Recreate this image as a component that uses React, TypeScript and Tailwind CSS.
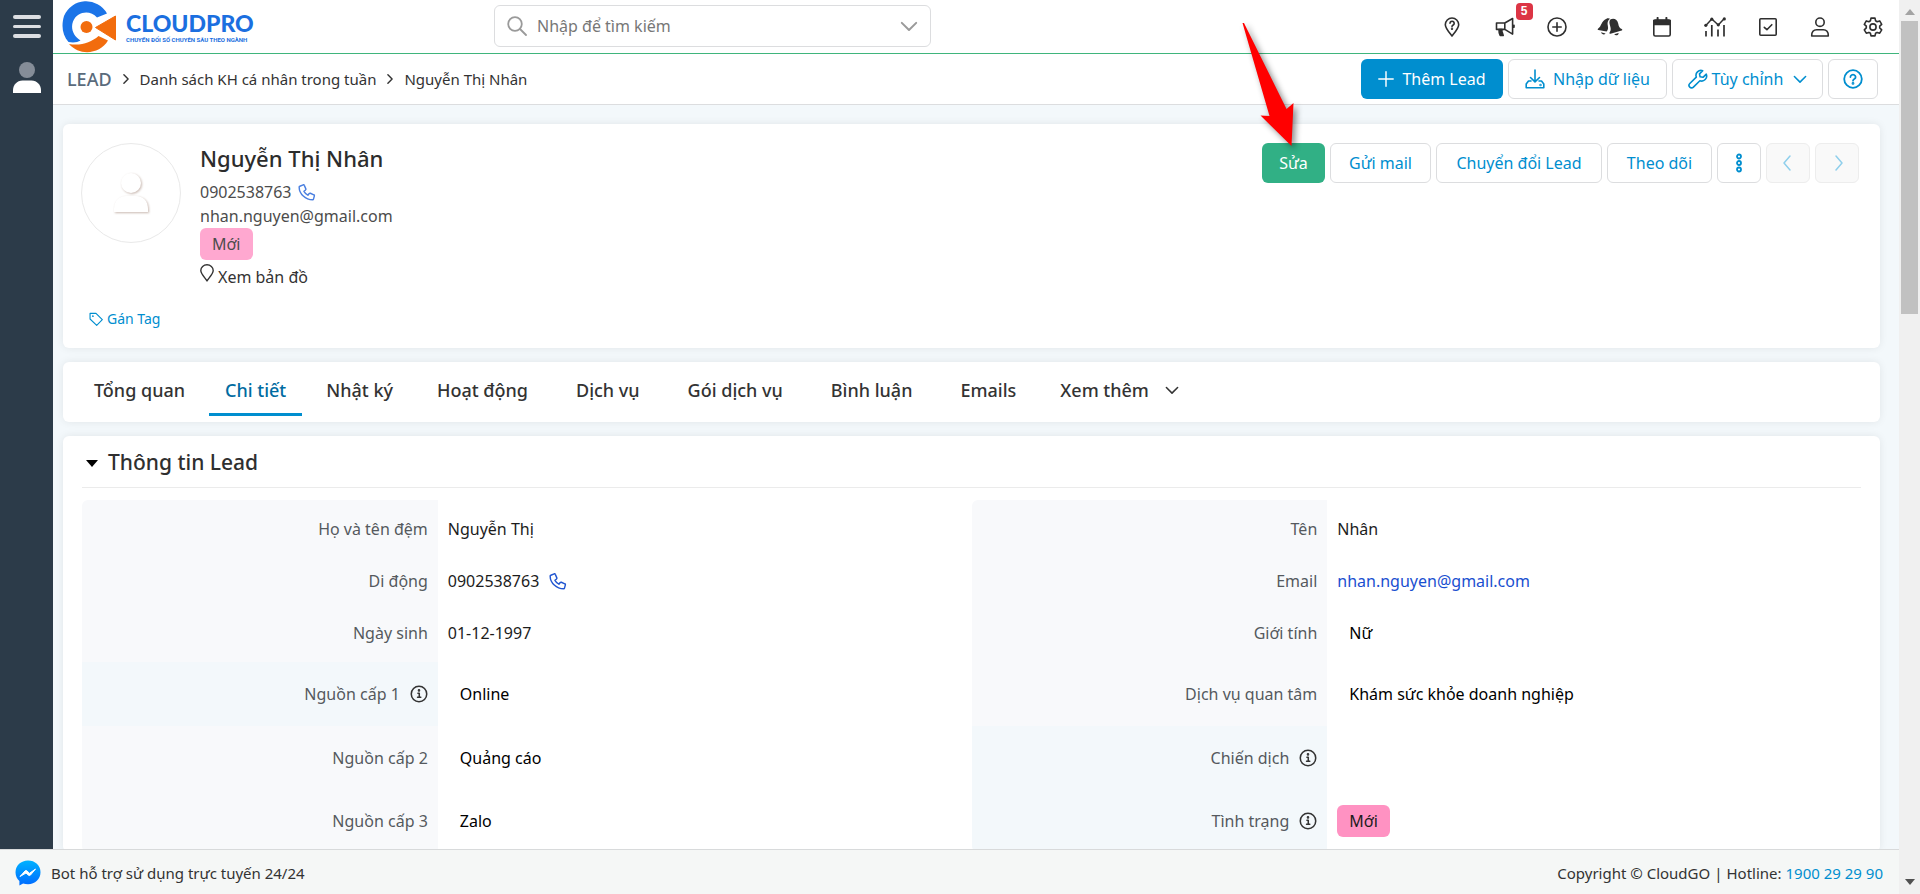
import type { ReactNode } from "react";

type IconProps = { className?: string };

function Stroke({ className, children, width = 1.6 }: IconProps & { children: ReactNode; width?: number }) {
  return (
    <svg viewBox="0 0 20 20" fill="none" stroke="currentColor" strokeWidth={width} strokeLinecap="round" strokeLinejoin="round" className={className} aria-hidden="true">
      {children}
    </svg>
  );
}

const ChevronDown = ({ className }: IconProps) => (
  <Stroke className={className} width={2.2}><path d="M2 6.5l8 8 8-8" /></Stroke>
);
const ChevronRight = ({ className }: IconProps) => (
  <Stroke className={className} width={2.4}><path d="M6.5 3l7 7-7 7" /></Stroke>
);
const ChevronLeft = ({ className }: IconProps) => (
  <Stroke className={className} width={1.5}><path d="M12 3l-6 7 6 7" /></Stroke>
);
const ChevronNext = ({ className }: IconProps) => (
  <Stroke className={className} width={1.5}><path d="M9 3l6 7-6 7" /></Stroke>
);
const Phone = ({ className }: IconProps) => (
  <Stroke className={className}>
    <path d="M2 3.6L5.8 2a1 1 0 0 1 1.2.6l1.7 3.9a1 1 0 0 1-.3 1.2L6.6 9.2a12 12 0 0 0 4.4 4.4l1.5-1.9a1 1 0 0 1 1.2-.3l3.9 1.7a1 1 0 0 1 .6 1.2l-1 3.6a1 1 0 0 1-1 .8C8.500 18.700 1.300 12 1.300 4.600a1 1 0 0 1 .7-1z" />
  </Stroke>
);
const Info = ({ className }: IconProps) => (
  <Stroke className={className} width={1.7}>
    <circle cx="10" cy="10" r="8.600" />
    <path d="M8.800 9.200h1.500v4.200M8.400 13.600h3.600" />
    <circle cx="10" cy="6" r="0.600" fill="currentColor" />
  </Stroke>
);
const Question = ({ className }: IconProps) => (
  <Stroke className={className} width={1.8}>
    <circle cx="10" cy="10" r="8.800" />
    <path d="M7.400 8a2.600 2.300 0 1 1 3.900 2c-.8.500-1.300.900-1.300 1.700" />
    <circle cx="10" cy="14.400" r="0.500" fill="currentColor" />
  </Stroke>
);
const MapQuestion = ({ className }: IconProps) => (
  <Stroke className={className}>
    <path d="M10 19c-1.200-1.700-6.700-7.600-6.700-11.300a6.700 6.700 0 0 1 13.400 0C16.700 11.400 11.200 17.300 10 19z" />
    <path d="M8 6.300a2.100 2 0 1 1 3.200 1.700c-.8.500-1.200.800-1.200 1.500" />
    <circle cx="10" cy="11.700" r="0.400" fill="currentColor" />
  </Stroke>
);
const Bullhorn = ({ className }: IconProps) => (
  <Stroke className={className}>
    <path d="M1.500 6h8.300v6.400H1.500zM9.800 6l7.800-4.500v15.600L9.800 12.400M19 8.300v2" />
    <path d="M4 12.600h2.800l.3 2.300 1.100 3.600H5.200C4.300 16.600 3.900 14.600 4 12.600z" fill="currentColor" />
  </Stroke>
);
const CirclePlus = ({ className }: IconProps) => (
  <Stroke className={className}><circle cx="10" cy="10" r="9" /><path d="M10 5.800v8.400M5.800 10h8.400" /></Stroke>
);
const Bells = ({ className }: IconProps) => (
  <svg viewBox="0 0 26 20" fill="currentColor" className={className} aria-hidden="true">
    <path d="M9.500 1.700c1.100-.6 2.800-.500 3.500.100-2.600 1.800-2.800 4.500-2.100 7.400.5 2.500-.100 4-1.300 5.400L1.300 13c-.8-.2-.9-1.100-.1-1.600C4.600 9.500 4 3.800 9.500 1.700z" />
    <path d="M13.600 2.200c3.500-1.500 6.900.300 7.600 4.200.5 3 1.300 4.500 3.500 5.500.9.400.8 1.300 0 1.600l-11.200 3.300c-1 .200-1.400-.700-.8-1.500 3.400-4.300-2.800-9.600.900-13.100z" />
    <path d="M4 15.300l4.600 1.100c-1.200 1.700-3.900 1.100-4.600-1.100zM17.200 17.300l4.400-1.300c.3 2-3 3.400-4.400 1.300z" />
  </svg>
);
const Calendar = ({ className }: IconProps) => (
  <Stroke className={className}>
    <rect x="1.800" y="3" width="16.400" height="16" rx="1.500" />
    <path d="M1.800 3.500h16.400v4H1.800z" fill="currentColor" />
    <path d="M5.600 3V.9M14.400 3V.9" strokeWidth="2" />
  </Stroke>
);
const Chart = ({ className }: IconProps) => (
  <svg viewBox="0 0 22 20" fill="none" stroke="currentColor" strokeWidth="1.500" className={className} aria-hidden="true">
    <path d="M1.800 8.500l6-6.500 6.500 6 6-6.500" />
    <path d="M2 14v5.500M7.800 8v11.500M14 12.500v7M20 8v11.500" strokeWidth="1.700" />
    <g fill="currentColor" stroke="none">
      <circle cx="1.800" cy="8.300" r="1.600" /><circle cx="7.800" cy="2.200" r="1.600" /><circle cx="14.300" cy="7.800" r="1.600" /><circle cx="20.300" cy="1.900" r="1.600" />
    </g>
  </svg>
);
const CheckBoxIcon = ({ className }: IconProps) => (
  <Stroke className={className}><rect x="1.800" y="1.800" width="16.400" height="16.400" rx="1" /><path d="M6.300 10.400l2.600 2.300 4.900-5" /></Stroke>
);
const User = ({ className }: IconProps) => (
  <Stroke className={className}>
    <circle cx="10" cy="5.200" r="4.200" />
    <path d="M1.700 19c-.3-4.300 2-6.300 5-6.300h6.600c3 0 5.300 2 5 6.300z" />
  </Stroke>
);
const Gear = ({ className }: IconProps) => (
  <Stroke className={className}>
    <circle cx="10" cy="10" r="3.100" />
    <path d="M8 1.100h4l.6 2.700 1.500.9 2.600-.8 2 3.400-2 1.900v1.700l2 1.900-2 3.400-2.600-.8-1.500.9-.6 2.600H8l-.6-2.600-1.500-.9-2.600.8-2-3.400 2-1.900V9.200l-2-1.900 2-3.400 2.600.8 1.500-.9z" />
  </Stroke>
);

const headerIcons: { label: string; icon: ReactNode; badge?: string }[] = [
  { label: "Hướng dẫn", icon: <MapQuestion className="size-5" /> },
  { label: "Thông báo", icon: <Bullhorn className="size-5" />, badge: "5" },
  { label: "Tạo nhanh", icon: <CirclePlus className="size-5" /> },
  { label: "Nhắc nhở", icon: <Bells className="h-5 w-[26px]" /> },
  { label: "Lịch", icon: <Calendar className="size-5" /> },
  { label: "Báo cáo", icon: <Chart className="h-5 w-[22px]" /> },
  { label: "Công việc", icon: <CheckBoxIcon className="size-5" /> },
  { label: "Tài khoản", icon: <User className="size-5" /> },
  { label: "Cài đặt", icon: <Gear className="size-5" /> },
];

const tabs = [
  { label: "Tổng quan", pad: "px-4" },
  { label: "Chi tiết", pad: "px-4", active: true },
  { label: "Nhật ký", pad: "px-4" },
  { label: "Hoạt động", pad: "px-5" },
  { label: "Dịch vụ", pad: "px-5" },
  { label: "Gói dịch vụ", pad: "px-5" },
  { label: "Bình luận", pad: "px-5" },
  { label: "Emails", pad: "px-5" },
  { label: "Xem thêm", pad: "px-4", more: true },
];

type Field = { label: string; value: ReactNode; inset?: boolean; info?: boolean; tinted?: boolean };

const StatusBadge = ({ className }: IconProps) => (
  <span className={`inline-flex h-8 items-center rounded-md px-3 ${className}`}>Mới</span>
);

const leftFields: Field[] = [
  { label: "Họ và tên đệm", value: "Nguyễn Thị" },
  {
    label: "Di động",
    value: (
      <span className="flex items-center gap-2.5">
        0902538763 <Phone className="size-[18px] text-[#2156d1]" />
      </span>
    ),
  },
  { label: "Ngày sinh", value: "01-12-1997" },
  { label: "Nguồn cấp 1", value: "Online", inset: true, info: true, tinted: true },
  { label: "Nguồn cấp 2", value: "Quảng cáo", inset: true },
  { label: "Nguồn cấp 3", value: "Zalo", inset: true },
];

const rightFields: Field[] = [
  { label: "Tên", value: "Nhân" },
  { label: "Email", value: <a href="#email" className="text-[#1a4fd0]">nhan.nguyen@gmail.com</a> },
  { label: "Giới tính", value: "Nữ", inset: true },
  { label: "Dịch vụ quan tâm", value: "Khám sức khỏe doanh nghiệp", inset: true },
  { label: "Chiến dịch", value: "", info: true, tinted: true },
  { label: "Tình trạng", value: <StatusBadge className="bg-[#ff92c2]" />, info: true, tinted: true },
];

const rowHeights = ["h-[58px]", "h-[46px]", "h-[58px]", "h-[64px]", "h-[63px]", "h-[63px]"];

function FieldTable({ fields }: { fields: Field[] }) {
  return (
    <table className="w-full table-fixed overflow-hidden rounded-md">
      <tbody>
        {fields.map((f, i) => (
          <tr key={f.label} className={rowHeights[i]}>
            <th scope="row" className={`w-2/5 pr-2.5 text-right font-normal text-[#55595e] ${f.tinted ? "bg-[#f3f8fb]" : "bg-[#f8f9fb]"}`}>
              <span className="inline-flex items-center gap-2.5">
                {f.label}
                {f.info && <Info className="size-[18px] text-[#333]" />}
              </span>
            </th>
            <td className={f.inset ? "pl-[22px] text-black" : "pl-2.5 text-[#1c1c1c]"}>{f.value}</td>
          </tr>
        ))}
      </tbody>
    </table>
  );
}

const outline = "flex h-10 items-center justify-center rounded-md border border-[#dcdddf] bg-white text-[#008ecf]";
const card = "rounded-md bg-white shadow-[0_0_8px_rgba(0,0,0,0.08)]";

function Logo() {
  return (
    <a href="#home" className="flex items-center gap-2.5" aria-label="CloudPro">
      <svg viewBox="0 0 54 52" className="h-[52px] w-[54px]" aria-hidden="true">
        <path d="M45 12.500A24 24 0 0 0 2 15C-1 25 .5 34 6.500 41c4.500 1 9 .5 12-1.500C11 35 8.500 27 11 20.500 15 10.500 28 8.500 35 16.500z" fill="#1b74e8" />
        <path d="M53.500 15v24L33.500 26.500z" fill="#f26c0d" strokeLinejoin="round" stroke="#f26c0d" strokeWidth="1" />
        <circle cx="24.500" cy="26" r="6" fill="#f26c0d" />
        <path d="M7 43c12 2 22-1.500 29.500-8l9.500 4.500C38 53 18 55.500 7 43z" fill="#f26c0d" />
      </svg>
      <span className="flex flex-col items-start gap-1 pt-1 text-[#1b6fe0]">
        <span className="font-['Lato'] text-[23px] leading-[18px] font-black">CLOUDPRO</span>
        <span className="font-['Roboto'] text-[6px] leading-[8px] font-bold">CHUYỂN ĐỔI SỐ CHUYÊN SÂU THEO NGÀNH</span>
      </span>
    </a>
  );
}

export default function App() {
  return (
    <div className="relative flex h-screen overflow-hidden bg-[#f3f8fb] font-['Noto_Sans',sans-serif] text-base leading-6 text-[#333]">
      <div className="flex min-w-0 flex-1 flex-col">
        <div className="flex min-h-0 flex-1">
          <nav className="flex w-[53px] shrink-0 flex-col items-center bg-[#2c3b49] pt-[15px]">
            <button aria-label="Menu" className="flex flex-col gap-1.5">
              <span className="h-1 w-7 rounded-sm bg-[#dcdee2]" />
              <span className="h-[3px] w-7 rounded-sm bg-[#dcdee2]" />
              <span className="h-1 w-7 rounded-sm bg-[#dcdee2]" />
            </button>
            <button aria-label="Cá nhân" className="mt-6">
              <svg viewBox="0 0 28 32" className="h-8 w-7">
                <circle cx="14" cy="8" r="8" fill="#858d98" />
                <path d="M0 31v-3c0-5 4-9.500 9.500-9.500h9c5.500 0 9.500 4.500 9.500 9.500v3z" fill="#fff" />
              </svg>
            </button>
          </nav>

          <div className="flex min-w-0 flex-1 flex-col overflow-hidden">
            <header className="flex h-[54px] shrink-0 items-center border-b border-[#3fb57c] bg-white pl-[9px]">
              <div className="w-[432px] shrink-0"><Logo /></div>
              <div className="-mt-0.5 flex h-[42px] w-[437px] items-center rounded-md border border-[#dcdddf] px-3">
                <Stroke className="size-5 text-[#9a9a9a]" width={1.8}>
                  <circle cx="8" cy="8" r="6.800" /><path d="M13 13l6 6" />
                </Stroke>
                <input aria-label="Tìm kiếm" placeholder="Nhập để tìm kiếm" className="min-w-0 flex-1 bg-transparent px-2.5 outline-none placeholder:text-[#777]" />
                <button aria-label="Chọn phân hệ"><ChevronDown className="size-[18px] text-[#9a9a9a]" /></button>
              </div>
              <div className="ml-auto grid w-[473px] grid-cols-9">
                {headerIcons.map((h) => (
                  <button key={h.label} aria-label={h.label} className="relative flex h-[54px] items-center justify-center text-[#2f2f2f]">
                    {h.icon}
                    {h.badge && (
                      <span className="absolute top-[3px] left-[37px] flex size-[17px] items-center justify-center rounded bg-[#dc3545] font-['Liberation_Sans'] text-xs font-bold text-white">
                        {h.badge}
                      </span>
                    )}
                  </button>
                ))}
              </div>
            </header>

            <div className="flex h-[51px] shrink-0 items-center border-b border-[#dcdddf] bg-white pr-[21px] pl-[14px]">
              <nav aria-label="Breadcrumb" className="flex items-center text-[15px]">
                <a href="#lead" className="text-[18px] font-medium text-[#5a6b7c]">LEAD</a>
                <ChevronRight className="mx-2 size-3" />
                <a href="#list">Danh sách KH cá nhân trong tuần</a>
                <ChevronRight className="mx-2 size-3" />
                <span>Nguyễn Thị Nhân</span>
              </nav>
              <div className="ml-auto flex gap-[5px]">
                <button className="flex h-10 w-[142px] items-center justify-center gap-2 rounded-md bg-[#008ecf] text-white">
                  <Stroke className="size-4" width={1.8}><path d="M10 1v18M1 10h18" /></Stroke>
                  Thêm Lead
                </button>
                <button className={`${outline} w-[159px] gap-2`}>
                  <Stroke className="size-5">
                    <path d="M10 1v11.500M5.500 8.500L10 12.800l4.500-4.300M6 12H3.500L1.200 15v3.800h17.600V15L16.500 12H14" /><circle cx="15.500" cy="16" r="0.400" />
                  </Stroke>
                  Nhập dữ liệu
                </button>
                <button className={`${outline} w-[151px] gap-1`}>
                  <Stroke className="size-5">
                    <path d="M18.300 5.200l-3.300 3.100-2.900-.5-.6-2.900L14.700 1.700a5 5 0 0 0-6.400 6.400L1.800 14.500a2.500 2.500 0 0 0 3.600 3.600l6.500-6.400a5 5 0 0 0 6.400-6.500z" />
                  </Stroke>
                  Tùy chỉnh
                  <ChevronDown className="ml-1.5 size-3.5" />
                </button>
                <button aria-label="Trợ giúp" className={`${outline} w-[50px]`}><Question className="size-5" /></button>
              </div>
            </div>

            <main className="flex min-h-0 flex-1 flex-col gap-3.5 overflow-hidden pt-[19px] pr-[19px] pl-2.5">
              <section className={`${card} flex shrink-0 flex-col px-[18px] pt-[19px] pb-[17px]`}>
                <div className="flex items-start">
                  <div className="flex size-[100px] items-center justify-center rounded-full border border-[#e9e9e9]">
                    <svg viewBox="0 0 36 42" className="h-[42px] w-9 drop-shadow-[1px_1px_1px_rgba(120,80,60,0.4)]" aria-hidden="true">
                      <circle cx="18" cy="11" r="10" fill="#fff" />
                      <path d="M1 40v-3c0-8 5-13 12-13h10c7 0 12 5 12 13v3z" fill="#fff" />
                    </svg>
                  </div>
                  <div className="ml-[19px] flex flex-col items-start">
                    <h1 className="pb-[7px] text-[22px] leading-[30px] font-medium text-[#2c2c2c]">Nguyễn Thị Nhân</h1>
                    <span className="flex items-center gap-1.5 text-[#4c4c4c]">
                      0902538763 <Phone className="size-[18px] text-[#4a7fe0]" />
                    </span>
                    <span className="text-[#4c4c4c]">nhan.nguyen@gmail.com</span>
                    <StatusBadge className="bg-[#ffa8d0] text-[#4c4c4c]" />
                    <button className="mt-[5px] flex items-center gap-1">
                      <svg viewBox="0 0 14 18" fill="none" stroke="currentColor" strokeWidth="1.400" strokeLinejoin="round" className="-mt-2 h-[18px] w-3.5" aria-hidden="true">
                        <path d="M7 17C5.800 14.700.8 10 .8 6.500a6.200 5.700 0 0 1 12.400 0C13.200 10 8.200 14.700 7 17z" />
                      </svg>
                      Xem bản đồ
                    </button>
                  </div>
                  <div className="ml-auto flex gap-[5px] pr-[3px]">
                    <button className="h-10 w-[63px] rounded-md bg-[#31b085] text-white">Sửa</button>
                    <button className={`${outline} w-[101px]`}>Gửi mail</button>
                    <button className={`${outline} w-[166px]`}>Chuyển đổi Lead</button>
                    <button className={`${outline} w-[105px]`}>Theo dõi</button>
                    <button aria-label="Thêm" className={`${outline} w-11`}>
                      <Stroke className="size-5" width={1.8}>
                        <circle cx="10" cy="3.500" r="2" /><circle cx="10" cy="10" r="2" /><circle cx="10" cy="16.500" r="2" />
                      </Stroke>
                    </button>
                    <button aria-label="Trước" className="flex h-10 w-11 items-center justify-center rounded-md border border-[#ededed] bg-[#f9f9f9] text-[#8fcfec]"><ChevronLeft className="size-5" /></button>
                    <button aria-label="Sau" className="flex h-10 w-11 items-center justify-center rounded-md border border-[#ededed] bg-[#f9f9f9] text-[#8fcfec]"><ChevronNext className="size-5" /></button>
                  </div>
                </div>
                <button className="mt-[18px] ml-2 flex items-center gap-1 self-start text-sm leading-6 text-[#008ecf]">
                  <Stroke className="size-3.5"><path d="M1.500 2h8.500l9 9-8 8-9.500-9z" /><circle cx="5.500" cy="6" r="0.500" /></Stroke>
                  Gán Tag
                </button>
              </section>

              <section className={`${card} flex h-[60px] shrink-0 gap-2 px-[15px]`} role="tablist">
                {tabs.map((t) => (
                  <button
                    key={t.label}
                    role="tab"
                    aria-selected={!!t.active}
                    className={`mb-1.5 flex items-center gap-4 border-b-[3px] pt-1 text-[18px] font-medium ${t.pad} ${t.active ? "border-[#008ecf] text-[#006ba1]" : "border-transparent"}`}
                  >
                    {t.label}
                    {t.more && <ChevronDown className="size-3.5" />}
                  </button>
                ))}
              </section>

              <section className={`${card} shrink-0 px-[19px]`}>
                <h2 className="flex h-[52px] items-center gap-2.5 border-b border-[#ebebeb] pl-1 text-[21px] font-medium text-[#2f2f2f]">
                  <svg viewBox="0 0 12 7" className="mt-1 h-[7px] w-3" aria-hidden="true"><path d="M0 0h12L6 7z" fill="#000" /></svg>
                  Thông tin Lead
                </h2>
                <div className="grid grid-cols-2 pt-3">
                  <FieldTable fields={leftFields} />
                  <FieldTable fields={rightFields} />
                </div>
              </section>
            </main>
          </div>
        </div>

        <footer className="flex h-[45px] shrink-0 items-center border-t border-[#d8dadb] bg-[#f5f7f6] pt-0.5 pr-4 pl-[15px] text-[15px]">
          <svg viewBox="0 0 26 26" className="size-[26px]" aria-hidden="true">
            <defs><linearGradient id="msg" x1="0" y1="0" x2="0" y2="1"><stop offset="0" stopColor="#00b2ff" /><stop offset="1" stopColor="#006aff" /></linearGradient></defs>
            <path d="M13 .5C6 .5.5 5.500.5 12.300c0 3.700 1.500 6.500 3.900 8.700v4.500l3.700-2c1.500.4 3.200.7 4.900.7 7 0 12.500-5 12.500-11.900S20 .5 13 .5z" fill="url(#msg)" />
            <path d="M5 16.500l5-5.500q1-1 2 0l2.500 2.300L20.500 9l-5 6q-1 1-2 .2L11 13z" fill="#fff" stroke="#fff" strokeLinejoin="round" />
          </svg>
          <span className="ml-2.5">Bot hỗ trợ sử dụng trực tuyến 24/24</span>
          <span className="ml-auto">
            Copyright © CloudGO<span className="px-1">|</span>Hotline: <a href="tel:1900292990" className="text-[#008ecf]">1900 29 29 90</a>
          </span>
        </footer>
      </div>

      <div className="flex w-[21px] shrink-0 flex-col items-center bg-[#f0f0f0] pt-[9px] pb-[9px]" aria-hidden="true">
        <svg viewBox="0 0 10 6" className="h-1.5 w-2.5"><path d="M0 6h10L5 0z" fill="#a3a3a3" /></svg>
        <span className="mt-1.5 h-[293px] w-[17px] bg-[#c1c1c1]" />
        <svg viewBox="0 0 10 6" className="mt-auto h-1.5 w-2.5"><path d="M0 0h10L5 6z" fill="#505050" /></svg>
      </div>

      <svg viewBox="0 0 60 140" className="pointer-events-none absolute top-[15px] right-[613px] h-[140px] w-[60px] overflow-visible drop-shadow-[3px_3px_3px_rgba(0,0,0,0.45)]" aria-hidden="true">
        <path d="M-4.500 8L-3 8 39.500 94 46.500 88 44.500 131 13.500 100.500 22.500 101z" fill="#f00" />
      </svg>
    </div>
  );
}
